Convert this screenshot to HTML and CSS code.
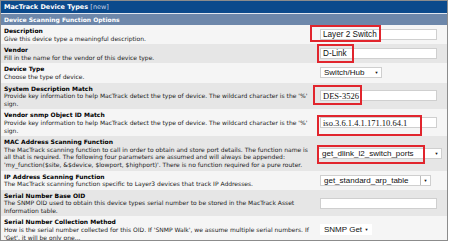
FILE: index.html
```html
<!DOCTYPE html>
<html lang="en">
  <head>
    <meta charset="UTF-8" />
    <title>MacTrack Device Types</title>
    <link rel="stylesheet" href="styles.css">
  </head>
  <body>
    <div class="frame">
      <div class="title">MacTrack Device Types <span class="new">[new]</span></div>
      <div class="section">Device Scanning Function Options</div>

      <div class="row light">
        <div class="info">
          <div class="label">Description</div>
          <div class="desc">Give this device type a meaningful description.</div>
        </div>
        <div class="field">
          <input type="text" class="text" value="Layer 2 Switch" />
          <span class="mark mark-desc"></span>
        </div>
      </div>

      <div class="row dark">
        <div class="info">
          <div class="label">Vendor</div>
          <div class="desc">Fill in the name for the vendor of this device type.</div>
        </div>
        <div class="field">
          <input type="text" class="text" value="D-Link" />
          <span class="mark mark-vendor"></span>
        </div>
      </div>

      <div class="row light">
        <div class="info">
          <div class="label">Device Type</div>
          <div class="desc">Choose the type of device.</div>
        </div>
        <div class="field">
          <div class="select select-type">Switch/Hub <span class="arrow">&#9660;</span></div>
        </div>
      </div>

      <div class="row dark">
        <div class="info">
          <div class="label">System Description Match</div>
          <div class="desc">Provide key information to help MacTrack detect the type of device. The wildcard character is the '%'<br>sign.</div>
        </div>
        <div class="field">
          <input type="text" class="text serif" value="DES-3526" />
          <span class="mark mark-sys"></span>
        </div>
      </div>

      <div class="row light">
        <div class="info">
          <div class="label">Vendor snmp Object ID Match</div>
          <div class="desc">Provide key information to help MacTrack detect the type of device. The wildcard character is the '%'<br>sign.</div>
        </div>
        <div class="field">
          <input type="text" class="text serif" value="iso.3.6.1.4.1.171.10.64.1" />
          <span class="mark mark-oid"></span>
        </div>
      </div>

      <div class="row dark">
        <div class="info">
          <div class="label">MAC Address Scanning Function</div>
          <div class="desc">The MacTrack scanning function to call in order to obtain and store port details. The function name is<br>all that is required. The following four parameters are assumed and will always be appended:<br>'my_function($site, &amp;$device, $lowport, $highport)'. There is no function required for a pure router.</div>
        </div>
        <div class="field">
          <div class="select select-mac">get_dlink_l2_switch_ports <span class="arrow">&#9660;</span></div>
          <span class="mark mark-mac"></span>
        </div>
      </div>

      <div class="row light">
        <div class="info">
          <div class="label">IP Address Scanning Function</div>
          <div class="desc">The MacTrack scanning function specific to Layer3 devices that track IP Addresses.</div>
        </div>
        <div class="field">
          <div class="select select-ip">get_standard_arp_table <span class="arrow split">&#9660;</span></div>
        </div>
      </div>

      <div class="row dark">
        <div class="info">
          <div class="label">Serial Number Base OID</div>
          <div class="desc">The SNMP OID used to obtain this device types serial number to be stored in the MacTrack Asset<br>Information table.</div>
        </div>
        <div class="field">
          <input type="text" class="text" value="" />
        </div>
      </div>

      <div class="row light">
        <div class="info">
          <div class="label">Serial Number Collection Method</div>
          <div class="desc">How is the serial number collected for this OID. If 'SNMP Walk', we assume multiple serial numbers. If<br>'Get', it will be only one...</div>
        </div>
        <div class="field">
          <div class="select select-serial">SNMP Get <span class="arrow">&#9660;</span></div>
        </div>
      </div>
    </div>
  </body>
</html>
```

FILE: styles.css
```css
body {
  margin: 0;
  background-color: #fff;
  font-family: "DejaVu Sans", Verdana, sans-serif;
}

/* the grey frame of the capture, the form runs on below it */
.frame {
  width: 446px;
  height: 239px;
  overflow: hidden;
  border: 1px solid #8c8c8c;
  background-color: #f5f5f5;
}

.title {
  background-color: #0b4a8c;
  color: #fff;
  font-size: 6.5px;
  font-weight: bold;
  height: 12px;
  line-height: 12px;
  padding-left: 3px;
}

.title .new {
  font-weight: normal;
  color: #c9d5e6;
}

.section {
  background-color: #6d87aa;
  color: #fff;
  font-size: 6px;
  font-weight: bold;
  height: 11px;
  line-height: 11px;
  padding-left: 3px;
  border-top: 1px solid #dfe5ee;
}

.row {
  display: grid;
  grid-template-columns: 317px 1fr;
  align-items: center;
  padding: 2px 0;
}

.light {
  background-color: #f5f5f5;
}

.dark {
  background-color: #e6e6e6;
}

.info {
  padding-left: 3px;
  font-size: 6px;
  line-height: 7.6px;
  color: #1a1a1a;
}

.label {
  font-weight: bold;
  color: #000;
}

.field {
  position: relative;
  height: 11px;
}

.text {
  display: block;
  box-sizing: border-box;
  width: 117px;
  height: 11px;
  margin: 0 0 0 2px;
  padding: 0 2px;
  border: 1px solid #cfcfcf;
  background-color: #fff;
  font-family: "Liberation Sans", Arial, sans-serif;
  font-size: 8.2px;
  color: #111;
  outline: none;
}

.text.serif {
  font-family: "Liberation Serif", "Times New Roman", serif;
  font-size: 8.5px;
}

.select {
  display: flex;
  align-items: center;
  box-sizing: border-box;
  height: 11px;
  margin-left: 2px;
  padding-left: 3px;
  border: 1px solid #cfcfcf;
  background-color: #fff;
  font-family: "Liberation Sans", Arial, sans-serif;
  font-size: 8px;
  color: #111;
  white-space: nowrap;
}

.select .arrow {
  margin-left: auto;
  width: 9px;
  text-align: center;
  font-size: 4px;
}

.select .arrow.split {
  border-left: 1px solid #bcbcbc;
  height: 100%;
  line-height: 9px;
}

.select-type {
  width: 62px;
}

.select-mac {
  width: 124px;
  margin-left: 0;
}

.select-ip {
  width: 111px;
}

.select-serial {
  width: 52px;
  border-color: #fff;
}

/* red annotation frames drawn over the values */
.mark {
  position: absolute;
  border: 2px solid #e1252d;
  box-sizing: border-box;
}

.mark-desc {
  left: -8px;
  top: -4px;
  width: 71px;
  height: 17px;
}

.mark-vendor {
  left: -1px;
  top: -4px;
  width: 37px;
  height: 19px;
}

.mark-sys {
  left: -5px;
  top: -5px;
  width: 49px;
  height: 20px;
}

.mark-oid {
  left: -1px;
  top: -2px;
  width: 105px;
  height: 21px;
}

.mark-mac {
  left: -1px;
  top: -3px;
  width: 108px;
  height: 19px;
}
```
